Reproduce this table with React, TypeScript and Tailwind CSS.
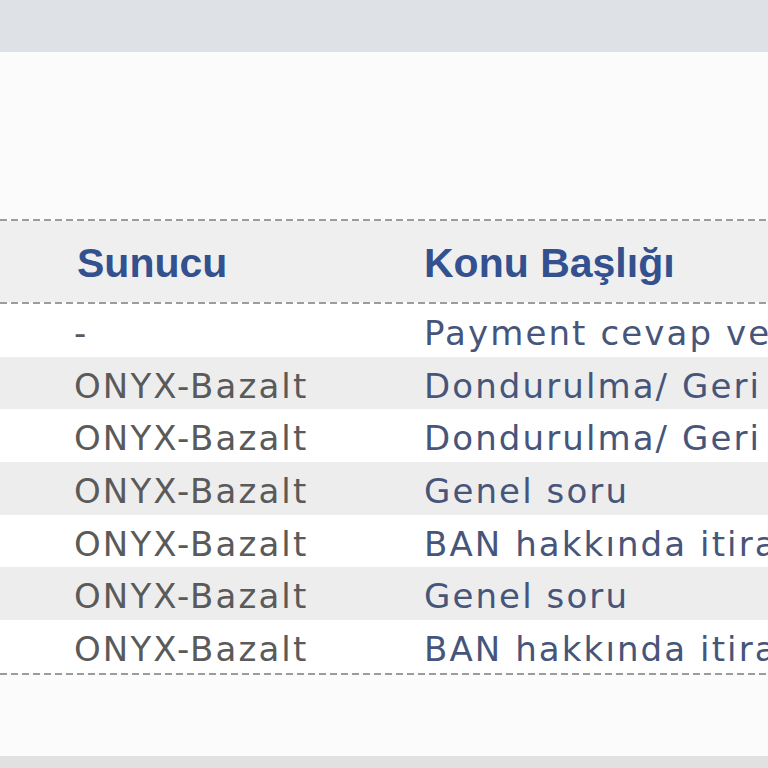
const rows = [
  { server: '-', subject: 'Payment cevap ve' },
  { server: 'ONYX-Bazalt', subject: 'Dondurulma/ Geri' },
  { server: 'ONYX-Bazalt', subject: 'Dondurulma/ Geri' },
  { server: 'ONYX-Bazalt', subject: 'Genel soru' },
  { server: 'ONYX-Bazalt', subject: 'BAN hakkında itira' },
  { server: 'ONYX-Bazalt', subject: 'Genel soru' },
  { server: 'ONYX-Bazalt', subject: 'BAN hakkında itira' },
]

function Dashes() {
  return (
    <div className="h-[2px] w-full shrink-0 bg-[linear-gradient(to_right,#9c9c9c_7px,transparent_7px)] bg-[length:11px_2px] bg-repeat-x" />
  )
}

export default function App() {
  return (
    <div className="w-[768px] h-[768px] overflow-hidden bg-[#fbfbfb] flex flex-col">
      {/* top bar */}
      <div className="h-[52px] shrink-0 bg-[#dee1e5]" />
      <div className="h-[167px] shrink-0 bg-[#fbfbfb]" />

      <Dashes />

      {/* header */}
      <div className="grid grid-cols-[424px_1fr] h-[81px] shrink-0 bg-[#efefef] items-center whitespace-nowrap font-['Liberation_Sans',Arial,sans-serif] font-bold text-[41px] text-[#33508f] pt-[4px]">
        <div className="pl-[77px]">Sunucu</div>
        <div>Konu Başlığı</div>
      </div>

      <Dashes />

      {/* rows */}
      <div className="flex flex-col font-['DejaVu_Sans',Verdana,sans-serif] text-[34px] tracking-[2.1px] whitespace-nowrap">
        {rows.map((r, i) => (
          <div
            key={i}
            className={`grid grid-cols-[424px_1fr] h-[52.7px] shrink-0 items-center pt-[4px] overflow-hidden ${i % 2 === 1 ? 'bg-[#ededed]' : 'bg-white'}`}
          >
            <div className="pl-[74px] text-[#5a5a5a]">{r.server}</div>
            <div className="text-[#47557a]">{r.subject}</div>
          </div>
        ))}
      </div>

      <Dashes />

      <div className="h-[81px] shrink-0 bg-[#fbfbfb]" />
      <div className="flex-1 bg-[#e1e1e1]" />
    </div>
  )
}
